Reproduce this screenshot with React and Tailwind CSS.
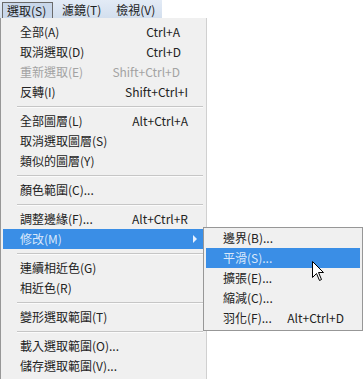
import React from "react";

const F = { fontFamily: '"Noto Sans CJK TC", "Noto Sans", sans-serif' };

function Row({ label, sc, scCls = "mr-[25px]", disabled, active, arrow }) {
  return (
    <div
      className={
        "h-[20px] flex items-center pl-[17px] relative " +
        (active ? "bg-[#3a8ee6] text-[#d9e8fb]" : disabled ? "text-[#a3a3a3]" : "text-[#222222]")
      }
    >
      <span>{label}</span>
      {sc && <span className={"ml-auto " + scCls}>{sc}</span>}
      {arrow && (
        <svg className="absolute right-[8px] top-[6px]" width="4" height="8" viewBox="0 0 4 8">
          <path d="M0 0 L4 4 L0 8 Z" fill={active ? "#e6f0ff" : "#000"} />
        </svg>
      )}
    </div>
  );
}

function Sep() {
  return (
    <div className="h-[9px] flex flex-col pt-[4px]">
      <div className="h-px ml-[14px] mr-[2px] bg-[#c6c6c6]" />
      <div className="h-px ml-[14px] mr-[2px] bg-[#fbfbfb]" />
    </div>
  );
}

export default function App() {
  return (
    <div className="w-[363px] h-[379px] bg-white relative overflow-hidden text-[12px] leading-none" style={F}>
      <div className="w-[162px] h-[18px] flex items-end bg-gradient-to-b from-[#e3ebf6] to-[#d3dfee] text-[#222222]">
        <div className="ml-[2px] w-[51px] h-[16px] border border-b-0 border-[#6b6b6b] bg-[#c9d7ea] flex items-center pl-[4px]">
          選取(S)
        </div>
        <div className="ml-[9px] h-[16px] flex items-center">濾鏡(T)</div>
        <div className="ml-[15px] h-[16px] flex items-center">檢視(V)</div>
      </div>
      <div className="w-[207px] h-[361px] bg-[#f0f0f0] border-l border-[#979797] border-r border-r-[#d0d0d0] pl-[2px] pr-[1px] pt-[4px]">
        <Row label="全部(A)" sc="Ctrl+A" />
        <Row label="取消選取(D)" sc="Ctrl+D" scCls="mr-[24px]" />
        <Row label="重新選取(E)" sc="Shift+Ctrl+D" disabled />
        <Row label="反轉(I)" sc="Shift+Ctrl+I" scCls="mr-[17px]" />
        <Sep />
        <Row label="全部圖層(L)" sc="Alt+Ctrl+A" scCls="mr-[17px]" />
        <Row label="取消選取圖層(S)" />
        <Row label="類似的圖層(Y)" />
        <Sep />
        <Row label="顏色範圍(C)..." />
        <Sep />
        <Row label="調整邊緣(F)..." sc="Alt+Ctrl+R" scCls="mr-[17px]" />
        <Row label="修改(M)" active arrow />
        <Sep />
        <Row label="連續相近色(G)" />
        <Row label="相近色(R)" />
        <Sep />
        <Row label="變形選取範圍(T)" />
        <Sep />
        <Row label="載入選取範圍(O)..." />
        <Row label="儲存選取範圍(V)..." />
      </div>

      <div className="absolute left-[203px] top-[227px] w-[160px] bg-[#f0f0f0] border border-[#979797] px-[2px] pb-[2px]">
        <Row label="邊界(B)..." />
        <Row label="平滑(S)..." active />
        <Row label="擴張(E)..." />
        <Row label="縮減(C)..." />
        <Row label="羽化(F)..." sc="Alt+Ctrl+D" scCls="mr-[16px]" />
      </div>

      <svg className="absolute left-[312px] top-[261px]" width="13" height="21" viewBox="0 0 13 21">
        <path d="M0.5 0.5 L0.5 16.5 L4.5 12.5 L7.5 19.5 L9.5 18.5 L6.5 11.5 L11.5 11.5 Z" fill="#fff" stroke="#000" strokeWidth="1" />
      </svg>
    </div>
  );
}
